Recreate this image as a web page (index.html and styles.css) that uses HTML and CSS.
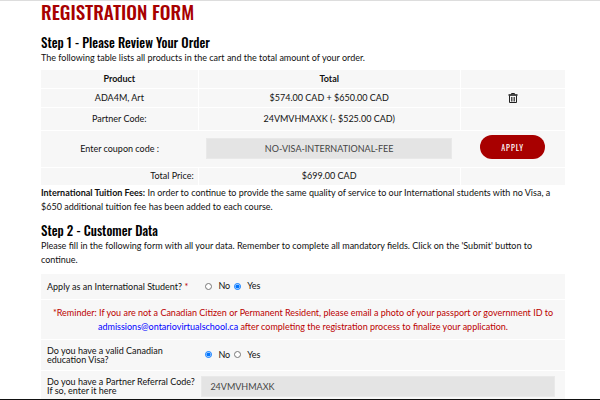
FILE: index.html
```html
<!DOCTYPE html>
<html lang="en">
	<head>
		<meta charset="UTF-8" />
		<meta name="viewport" content="width=device-width, initial-scale=1.0" />
		<title>Registration Form</title>
		<link rel="stylesheet" href="styles.css">
	</head>
	<body>
		<main class="registration">
			<h1 class="page-title">REGISTRATION FORM</h1>

			<section class="step">
				<h2 class="step-title">Step 1 - Please Review Your Order</h2>
				<p class="step-text">The following table lists all products in the cart and the total amount of your order.</p>
				<table class="order-table">
					<colgroup>
						<col class="col-product" />
						<col class="col-total" />
						<col class="col-action" />
					</colgroup>
					<thead>
						<tr>
							<th scope="col">Product</th>
							<th scope="col">Total</th>
							<td></td>
						</tr>
					</thead>
					<tbody>
						<tr class="row-item">
							<td>ADA4M, Art</td>
							<td>$574.00 CAD + $650.00 CAD</td>
							<td>
								<button class="remove-button" type="button" aria-label="Remove ADA4M, Art">
									<svg class="trash-icon" viewBox="0 0 10 10" fill="none" stroke="#222">
										<path d="M3.500 1.500V.5h3v1" />
										<path d="M.5 2h9" stroke-width="1.600" />
										<path d="M1.500 2.500v7h7v-7" />
										<path d="M3.500 4v4.500M5 4v4.500M6.500 4v4.500" stroke-width=".8" />
									</svg>
								</button>
							</td>
						</tr>
						<tr class="row-partner">
							<td>Partner Code:</td>
							<td>24VMVHMAXK (- $525.00 CAD)</td>
							<td></td>
						</tr>
						<tr class="row-coupon">
							<td><label for="coupon_code">Enter coupon code :</label></td>
							<td><input class="text-input coupon-input" type="text" name="coupon_code" id="coupon_code" value="NO-VISA-INTERNATIONAL-FEE" /></td>
							<td class="apply-cell"><button class="apply-button" type="button">APPLY</button></td>
						</tr>
						<tr>
							<td class="total-label">Total Price:</td>
							<td>$699.00 CAD</td>
							<td></td>
						</tr>
					</tbody>
				</table>
				<p class="step-text"><strong>International Tuition Fees:</strong> In order to continue to provide the same quality of service to our International students with no Visa, a $650 additional tuition fee has been added to each course.</p>
			</section>

			<section class="step">
				<h2 class="step-title">Step 2 - Customer Data</h2>
				<p class="step-text">Please fill in the following form with all your data. Remember to complete all mandatory fields. Click on the 'Submit' button to continue.</p>
				<form class="customer-form" action="#" method="POST">
					<div class="form-row row-student" role="radiogroup" aria-labelledby="student_label">
						<span class="form-label" id="student_label">Apply as an International Student? <span class="required">*</span></span>
						<div class="radio-group">
							<input type="radio" name="international" id="international_no" />
							<label for="international_no">No</label>
							<input type="radio" name="international" id="international_yes" checked />
							<label for="international_yes">Yes</label>
						</div>
					</div>
					<p class="reminder">*Reminder: If you are not a Canadian Citizen or Permanent Resident, please email a photo of your passport or government ID to <a href="mailto:admissions@ontariovirtualschool.ca">admissions@ontariovirtualschool.ca</a> after completing the registration process to finalize your application.</p>
					<div class="form-row row-visa" role="radiogroup" aria-labelledby="visa_label">
						<span class="form-label" id="visa_label">Do you have a valid Canadian education Visa?</span>
						<div class="radio-group">
							<input type="radio" name="visa" id="visa_no" checked />
							<label for="visa_no">No</label>
							<input type="radio" name="visa" id="visa_yes" />
							<label for="visa_yes">Yes</label>
						</div>
					</div>
					<div class="form-row">
						<label class="form-label" for="referral_code">Do you have a Partner Referral Code? If so, enter it here</label>
						<input class="text-input" type="text" name="referral_code" id="referral_code" value="24VMVHMAXK" />
					</div>
				</form>
			</section>
		</main>
	</body>
</html>
```

FILE: styles.css
```css
* {
	box-sizing: border-box;
}
body {
	margin: 0;
	height: 100vh;
	overflow: hidden;
	border-top: 1px solid #ddd;
	border-bottom: 1px solid #111;
	background-color: white;
	color: #111;
	font-family: Lato, sans-serif;
	font-size: 9px;
	line-height: 14px;
}
.registration {
	padding: 0 35px 0 41px;
}
.page-title,
.step-title {
	margin: 0;
	font-family: Oswald, "Liberation Sans Narrow", sans-serif;
	font-weight: 500;
}
.page-title {
	margin-bottom: 4px;
	color: #a80000;
	font-size: 19px;
	line-height: 21px;
}
.step-title {
	padding-top: 8px;
	color: black;
	font-size: 13px;
	line-height: 17px;
}
.step-text {
	margin: 0;
}

/* order review */
.order-table {
	width: 100%;
	margin-top: 5px;
	border-collapse: collapse;
	table-layout: fixed;
	text-align: center;
}
.col-product {
	width: 30%;
}
.col-total {
	width: 50%;
}
.col-action {
	width: 20%;
}
.order-table tr {
	height: 18px;
	border-bottom: 1px solid white;
	background-color: #f7f7f7;
}
.order-table th,
.order-table td {
	padding: 0 4px;
	border-right: 1px solid white;
}
.order-table td:last-child {
	border-right: none;
}
.order-table .row-item {
	height: 19px;
}
.order-table .row-partner {
	height: 23px;
}
.order-table .row-coupon {
	height: 37px;
}
.order-table .row-coupon td {
	padding: 0 8px;
	border-right: none;
}
.order-table .row-coupon .apply-cell {
	padding-bottom: 4px;
}
.order-table .total-label {
	text-align: right;
}
.remove-button {
	display: block;
	margin: 0 auto;
	padding: 0;
	border: none;
	background: none;
}
.trash-icon {
	display: block;
	width: 10px;
	height: 10px;
}
.text-input {
	height: 21px;
	padding: 0 8px;
	border: 1px solid #e9e9e9;
	background-color: #e4e4e4;
	color: #444;
	font: inherit;
}
.coupon-input {
	display: block;
	width: 100%;
	text-align: center;
}
.apply-button {
	display: block;
	width: 65px;
	height: 24px;
	margin: 0 auto;
	border: none;
	border-radius: 12px;
	background-color: #a80000;
	color: white;
	font-family: Oswald, "Liberation Sans Narrow", sans-serif;
	font-size: 8px;
	letter-spacing: 1px;
}

/* customer data */
.customer-form {
	margin-top: 7px;
}
.form-row,
.reminder {
	margin: 0 0 1px;
	background-color: #f7f7f7;
}
.form-row {
	display: grid;
	grid-template-columns: 30% 1fr;
	column-gap: 2px;
	align-items: center;
	padding: 5px 10px 5px 6px;
}
.row-student {
	min-height: 25px;
}
.row-visa {
	min-height: 30px;
}
.form-label {
	line-height: 9px;
}
.required,
.reminder {
	color: #b00;
}
.radio-group {
	display: flex;
	align-items: center;
}
.radio-group input {
	width: 7px;
	height: 7px;
	margin: 0 6px 0 4px;
}
.reminder {
	padding: 6px 10px 5px;
	text-align: center;
}
.reminder a {
	color: blue;
	text-decoration: none;
}
```
